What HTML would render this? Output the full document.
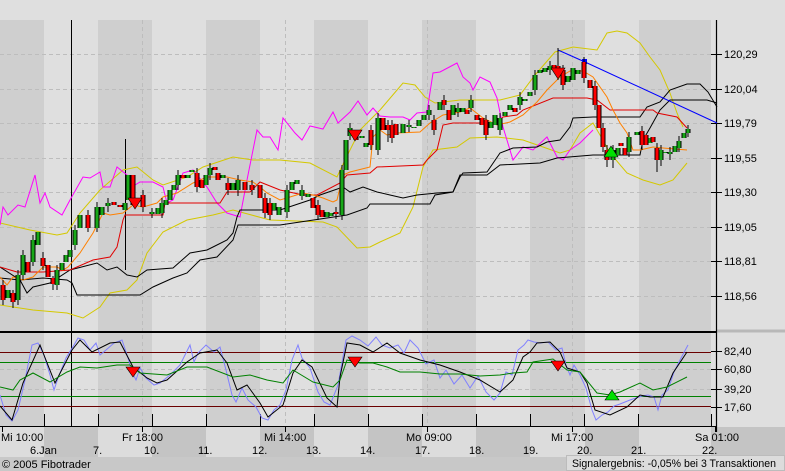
<!DOCTYPE html>
<html><head><meta charset="utf-8"><style>
html,body{margin:0;padding:0;background:#dfdfdf;width:785px;height:471px;overflow:hidden}
svg{display:block}
text{font-family:"Liberation Sans",Arial,sans-serif;font-size:11px;fill:#000}
</style></head><body>
<svg width="785" height="471" viewBox="0 0 785 471" xmlns="http://www.w3.org/2000/svg">
<defs>
<path id="gb" fill="none" d="M8 290V298M18 275V300M23 255V275M33 240V262M38 232V245M57 270V285M62 263V270M66 255V262M70 250V257M75 230V245M80 215V228M97 207V228M102 207V215M108 203V206M125 203V210M128 175V200M152 212V214M158 208V214M162 203V213M166 200V205M170 190V200M174 185V190M178 175V185M188 175V178M192 170V172M206 175V185M210 168V175M223 175V178M233 183V190M238 180V190M274 203V210M279 207V215M287 190V212M292 182V190M297 180V184M302 190V196M308 194V197M327 212V217M331 213V216M342 170V215M346 140V170M350 128V136M362 136V138M366 143V147M378 118V150M403 124V133M409 125V127M414 127V128M419 120V126M424 115V120M429 110V115M440 102V110M453 105V115M458 108V112M463 108V112M471 100V108M491 122V128M495 115V125M500 118V130M505 112V116M510 105V110M520 97V105M525 99V101M530 92V96M535 75V90M540 70V73M545 68V72M550 66V70M568 76V82M573 68V80M578 70V74M613 150V160M618 148V155M629 137V152M637 132V135M650 138V143M661 150V160M665 152V153M670 152V154M675 146V152M679 141V148M684 133V138M688 129V133"/>
<path id="rb" fill="none" d="M3 285V300M13 293V302M28 262V272M43 258V266M48 265V277M53 278V284M88 215V228M114 202V205M120 205V207M133 175V205M143 195V207M183 175V178M197 173V187M202 180V188M215 167V170M218 173V180M228 183V190M245 182V190M252 185V190M260 185V198M265 198V213M270 203V215M313 198V208M318 205V215M322 210V217M336 212V214M356 130V140M371 130V145M383 118V130M388 125V130M392 125V138M396 124V135M434 120V130M444 100V105M449 110V120M467 110V114M477 115V120M482 118V125M486 120V135M515 108V112M554 65V68M558 66V75M563 70V85M584 62V78M590 80V88M595 86V105M599 105V128M603 128V147M607 150V160M621 143V146M625 148V155M642 131V145M646 135V145M653 137V142M657 148V160"/>
</defs>
<rect x="0" y="0" width="785" height="471" fill="#dfdfdf"/>
<g fill="#cfcfcf">
<rect x="0" y="20" width="44" height="406"/>
<rect x="98" y="20" width="54" height="406"/>
<rect x="206" y="20" width="54" height="406"/>
<rect x="314" y="20" width="54" height="406"/>
<rect x="422" y="20" width="54" height="406"/>
<rect x="530" y="20" width="55" height="406"/>
<rect x="639" y="20" width="72" height="406"/>
</g>
<rect x="0" y="427" width="785" height="30" fill="#c4c4c4"/>
<g fill="#dcdcdc">
<rect x="0" y="427" width="44" height="30"/>
<rect x="98" y="427" width="54" height="30"/>
<rect x="206" y="427" width="54" height="30"/>
<rect x="314" y="427" width="54" height="30"/>
<rect x="422" y="427" width="54" height="30"/>
<rect x="530" y="427" width="55" height="30"/>
<rect x="639" y="427" width="72" height="30"/>
</g>
<rect x="0" y="457" width="785" height="14" fill="#c8c8c8"/>
<rect x="711" y="427" width="74" height="30" fill="#c4c4c4"/>
<g stroke="#bdbdbd" stroke-dasharray="4,3" stroke-width="1">
<path d="M0 54.5H711M0 89.5H711M0 123.5H711M0 158.5H711M0 192.5H711M0 227.5H711M0 261.5H711M0 296.5H711"/>
<path d="M0 369.5H711M0 389.5H711"/>
<path d="M142.5 20V426M285.5 20V426M427.5 20V426M572.5 20V426"/>
</g>
<path d="M0 331.5H716M0 332.5H716" stroke="#000" stroke-width="1"/>
<path d="M716 331H785" stroke="#b8b8b8" stroke-width="3"/>
<path d="M716.5 20V432" stroke="#000" stroke-width="1.2"/>
<path d="M0 426.5H716" stroke="#000"/>
<path d="M44.5 414V426M98.5 414V426M152.5 414V426M206.5 414V426M260.5 414V426M314.5 414V426M368.5 414V426M422.5 414V426M476.5 414V426M530.5 414V426M584.5 414V426M638.5 414V426M711.5 414V426" stroke="#000"/>
<path d="M2.5 427V432M142.5 427V432M285.5 427V432M427.5 427V432M572.5 427V432M715.5 427V432" stroke="#000"/>
<path d="M711 54.5H722M711 89.5H722M711 123.5H722M711 158.5H722M711 192.5H722M711 227.5H722M711 261.5H722M711 296.5H722M711 351.5H722M711 369.5H722M711 389.5H722M711 407.5H722" stroke="#000"/>
<g>
<text x="724" y="58">120,29</text><text x="724" y="93">120,04</text><text x="724" y="127">119,79</text><text x="724" y="162">119,55</text><text x="724" y="196">119,30</text><text x="724" y="231">119,05</text><text x="724" y="265">118,81</text><text x="724" y="300">118,56</text>
<text x="724" y="355">82,40</text><text x="724" y="373">60,80</text><text x="724" y="393">39,20</text><text x="724" y="411">17,60</text>
</g>
<path d="M71.5 20V426" stroke="#000"/>
<path d="M125.5 139V270" stroke="#000"/>
<g fill="none" stroke-width="1">
<polyline stroke="#d4c800" points="0,223 30,230 57,235 67,233 80,213 100,190 123,170 137,167 153,180 163,185 187,177 203,167 233,157 253,160 280,160 310,163 337,177 345,160 360,130 380,110 403,83 415,85 425,97 435,103 460,100 500,100 520,95 535,75 555,52 573,47 597,50 607,33 617,31 627,33 640,43 650,57 660,70 670,93 677,113 683,127"/>
<polyline stroke="#d4c800" points="0,305 33,310 67,313 83,318 100,307 110,293 127,290 137,280 147,253 163,232 187,220 213,215 233,210 270,220 323,222 337,227 357,248 370,247 380,242 400,233 413,207 423,167 433,150 457,147 470,138 497,137 523,140 543,147 560,153 570,150 580,133 593,123 600,135 610,153 627,173 643,180 660,185 673,180 687,163"/>
<polyline stroke="#ff00ff" points="0,225 3,207 8,215 18,205 25,207 35,175 40,203 45,193 50,207 62,215 70,200 83,177 90,178 100,172 103,187 110,187 117,167 127,175 130,188 140,182 153,182 163,187 167,203 173,200 183,173 193,170 207,187 217,203 227,213 240,217 247,180 257,130 263,137 270,137 278,150 283,118 295,133 302,140 310,126 323,129 333,112 338,123 350,112 358,101 367,115 373,108 380,116 390,117 403,117 410,120 417,113 427,112 433,73 440,72 457,63 463,77 470,83 473,90 480,77 490,82 497,98 503,127 513,160 523,147 533,150 547,137 557,157 563,160 570,150 580,143 593,130"/>
<polyline stroke="#000" points="0,267 20,280 27,293 33,287 50,283 70,270 97,263 107,270 117,267 127,275 137,277 147,270 173,268 190,253 207,250 213,247 227,240 233,233 237,217 240,210 280,210 310,200 320,195 343,187 350,192 363,187 377,192 390,195 403,198 417,195 437,193 453,192 460,177 463,173 487,172 500,153 513,148 537,147 547,142 560,140 570,127 573,118 593,117 640,117 647,107 660,102 670,90 687,84 700,84 708,92 717,107"/>
<polyline stroke="#000" points="0,278 20,280 43,278 67,280 72,283 77,295 140,295 153,287 173,278 187,273 200,260 217,257 233,240 238,225 280,225 347,215 367,208 370,204 430,204 435,195 453,192 460,175 487,175 500,165 540,163 557,158 593,155 640,155 643,140 650,128 660,110 670,100 707,100 717,103"/>
<polyline stroke="#e00000" points="0,267 17,272 43,272 70,270 93,260 110,257 117,247 123,220 125,215 163,215 165,203 220,203 227,192 250,192 260,182 280,190 303,195 317,195 340,183 347,175 370,173 377,167 423,165 427,160 437,150 443,125 453,123 497,123 503,117 517,115 523,110 553,98 587,98 597,100 610,110 653,110 657,113 677,117 687,128"/>
<polyline stroke="#ff8000" points="0,277 7,285 13,277 23,280 33,277 43,267 57,267 63,270 68,267 80,253 93,233 103,213 110,215 123,213 133,205 143,207 157,203 163,197 177,193 193,183 207,177 227,177 240,180 253,182 260,187 267,193 280,200 290,197 303,193 313,195 323,198 333,202 337,200 343,175 350,172 370,167 373,137 380,130 387,135 397,133 420,132 430,123 443,115 460,112 470,108 483,118 497,125 510,122 523,115 537,102 547,90 560,77 570,71 583,71 593,77 607,97 613,110 620,123 627,133 633,150 640,150 653,147 663,148 687,150"/>
<polyline stroke="#0000ff" points="558,50 585,62 717,123"/>
</g>
<rect x="582" y="59" width="5" height="5" fill="#0000ff"/>
<path fill="none" stroke="#000" stroke-width="1" d="M3 280V305M13 290V308M18 270V305M23 250V280M33 235V266M43 252V270M53 276V290M57 265V290M75 225V250M88 210V232M97 202V232M108 198V212M143 190V212M152 208V218M162 198V218M178 170V190M197 168V192M210 163V180M228 178V195M238 175V196M252 180V195M265 193V218M270 198V220M287 185V218M302 185V200M318 200V220M336 207V219M342 165V220M350 123V140M371 125V150M378 113V155M388 120V142M392 120V143M409 120V132M429 105V120M434 115V135M444 95V110M458 103V117M471 95V112M486 115V140M500 113V135M520 92V110M535 70V95M550 61V75M558 48V80M563 65V90M584 57V83M595 81V110M603 123V152M607 145V167M613 145V168M629 132V157M642 126V150M657 143V172M661 145V166M670 147V160M679 136V152M688 125V137"/>
<use href="#gb" stroke="#000" stroke-width="5"/>
<use href="#gb" stroke="#18a818" stroke-width="3"/>
<use href="#rb" stroke="#000" stroke-width="5"/>
<use href="#rb" stroke="#ff0000" stroke-width="3"/>
<g stroke="#000" stroke-width="0.6">
<path d="M128 198H142L135 209Z" fill="#ff0000"/>
<path d="M348 130H362L355 141Z" fill="#ff0000"/>
<path d="M551 68H565L558 79Z" fill="#ff0000"/>
<path d="M604 157H618L611 146Z" fill="#00e000"/>
</g>
<path d="M0 352.5H711M0 406.5H711" stroke="#6a0000" stroke-width="1"/>
<path d="M0 362.5H711M0 396.5H711" stroke="#008000" stroke-width="1"/>
<g fill="none" stroke-width="1">
<polyline stroke="#8080ff" points="0,395 6,415 12,421 18,410 25,380 32,345 38,343 44,355 50,375 54,390 58,378 66,358 74,345 78,338 84,340 90,350 96,343 100,355 106,350 114,343 122,340 128,358 132,372 136,380 140,368 146,378 154,385 160,383 170,375 180,365 190,345 194,362 198,353 206,345 214,352 220,347 226,370 232,395 236,402 242,388 248,400 256,407 262,418 268,420 274,410 280,405 286,390 292,360 298,345 302,358 310,368 318,392 324,402 330,405 338,385 346,340 352,336 360,340 368,346 376,337 382,345 390,348 398,345 404,353 410,340 418,348 426,364 434,360 440,378 446,370 454,384 462,375 470,388 478,376 486,392 494,400 500,393 506,372 512,375 518,350 524,345 528,340 534,342 540,343 548,342 556,350 562,348 566,365 570,375 574,365 580,375 586,388 592,410 596,420 602,415 608,412 614,406 620,404 630,400 636,398 642,396 648,395 654,397 658,410 662,395 668,390 674,372 680,360 688,345"/>
<polyline stroke="#000" points="0,406 12,420 23,383 40,345 55,383 72,350 80,340 92,352 110,343 120,342 133,367 147,378 157,383 167,380 187,362 200,353 217,350 227,363 237,390 247,385 260,403 268,417 283,405 293,373 302,360 312,367 327,398 337,407 340,377 347,343 360,345 373,352 387,343 400,353 420,360 440,365 460,372 480,380 500,392 513,380 523,357 530,352 537,343 550,342 560,352 567,368 580,372 587,383 595,410 610,415 627,407 640,395 650,397 663,397 673,373 687,352"/>
<polyline stroke="#008000" points="0,387 13,390 20,380 33,373 50,382 67,372 80,367 97,368 117,365 130,365 140,373 167,375 187,367 207,367 233,377 250,375 267,380 283,383 293,370 313,382 333,387 340,380 347,360 360,363 373,363 387,367 400,372 420,372 440,374 460,374 480,376 500,375 513,373 527,372 533,362 553,359 567,370 580,372 597,393 610,395 620,392 640,383 653,390 667,387 687,377"/>
</g>
<g stroke="#000" stroke-width="0.6">
<path d="M126 367H140L133 377Z" fill="#ff0000"/>
<path d="M348 357H362L355 367Z" fill="#ff0000"/>
<path d="M551 361H565L558 371Z" fill="#ff0000"/>
<path d="M605 400H619L612 390Z" fill="#00e000"/>
</g>
<g>
<text x="1" y="441">Mi 10:00</text>
<text x="122" y="441">Fr 18:00</text>
<text x="264" y="441">Mi 14:00</text>
<text x="406" y="441">Mo 09:00</text>
<text x="551" y="441">Mi 17:00</text>
<text x="695" y="441">Sa 01:00</text>
<text x="30" y="454">6.Jan</text>
<text x="93" y="454">7.</text>
<text x="144" y="454">10.</text>
<text x="198" y="454">11.</text>
<text x="252" y="454">12.</text>
<text x="306" y="454">13.</text>
<text x="360" y="454">14.</text>
<text x="415" y="454">17.</text>
<text x="469" y="454">18.</text>
<text x="523" y="454">19.</text>
<text x="577" y="454">20.</text>
<text x="631" y="454">21.</text>
<text x="702" y="454">22.</text>
</g>
<text x="2" y="468">© 2005 Fibotrader</text>
<rect x="566.5" y="455.5" width="218" height="15" fill="#dcdcdc" stroke="#bcbcbc"/>
<text x="572" y="467" textLength="204" lengthAdjust="spacingAndGlyphs">Signalergebnis: -0,05% bei 3 Transaktionen</text>
</svg>
</body></html>
